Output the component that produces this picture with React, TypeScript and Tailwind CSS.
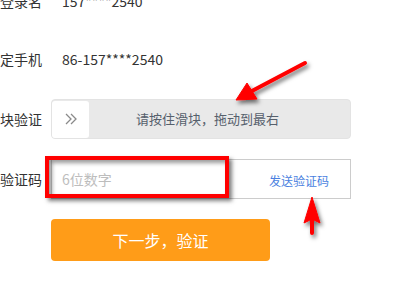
export default function App() {
  const font = { fontFamily: '"Noto Sans CJK SC", "Noto Sans", sans-serif' };

  return (
    <main className="relative h-[300px] w-[400px] overflow-hidden bg-white" style={font}>
      <div className="mt-[-21px] flex flex-col gap-5">
        <div className="flex h-[40px] items-center pt-[4px]">
          <div className="flex w-[42px] shrink-0 justify-end whitespace-nowrap text-[14px] text-[#333]">登录名</div>
          <div className="ml-5 text-[14px] text-[#333]">157****2540</div>
        </div>

        <div className="flex h-[40px] items-center">
          <div className="flex w-[42px] shrink-0 justify-end whitespace-nowrap text-[14px] text-[#333]">绑定手机</div>
          <div className="ml-5 text-[14px] text-[#333]">86-157****2540</div>
        </div>

        <div className="flex h-[40px] items-center">
          <div className="flex w-[42px] shrink-0 justify-end whitespace-nowrap text-[14px] text-[#333]">滑块验证</div>
          <div className="relative ml-[9px] flex h-[40px] w-[300px] items-center rounded-[4px] border border-[#e3e3e3] bg-[#e9e9e9]">
            <div className="flex h-[37px] w-[37px] items-center justify-center rounded-[3px] bg-white">
              <svg width="14" height="14" viewBox="0 0 14 14" fill="none" stroke="#8a8a8a" strokeWidth="1.3">
                <polyline points="2,2 7,7 2,12" />
                <polyline points="7,2 12,7 7,12" />
              </svg>
            </div>
            <div className="flex-1 pr-[24px] text-center text-[13px] text-[#56606c]">请按住滑块，拖动到最右</div>
          </div>
        </div>

        <div className="flex h-[40px] items-center">
          <div className="flex w-[42px] shrink-0 justify-end whitespace-nowrap text-[14px] text-[#333]">验证码</div>
          <div className="relative ml-[9px] flex h-[40px] w-[300px] items-center justify-between border border-[#cccccc] pl-[10px] pr-[21px]">
            <span className="text-[14px] text-[#bdbdbd]">6位数字</span>
            <span className="mt-[4px] text-[12px] text-[#4a7fe0]">发送验证码</span>
            <div className="absolute left-[-7px] top-[-4px] h-[42px] w-[184px] border-4 border-[#ff0000] shadow-[3px_3px_4px_rgba(0,0,0,0.5),inset_3px_3px_4px_rgba(0,0,0,0.4)]" />
          </div>
        </div>

        <div className="ml-[51px] flex h-[42px] w-[219px] items-center justify-center rounded-[4px] bg-[#ff9c18] text-[16px] text-white">
          下一步，验证
        </div>
      </div>

      <svg className="pointer-events-none absolute left-0 top-0" width="400" height="300" viewBox="0 0 400 300">
        <defs>
          <filter id="sh" x="-20%" y="-20%" width="140%" height="140%">
            <feDropShadow dx="2" dy="3" stdDeviation="2" floodColor="#000" floodOpacity="0.55" />
          </filter>
        </defs>
        <g filter="url(#sh)" fill="#ff0000" stroke="#ff0000">
          <line x1="305" y1="63" x2="250" y2="92" strokeWidth="4" strokeLinecap="round" />
          <polygon points="236,100 257,99 252,91 247,83" strokeWidth="1" strokeLinejoin="round" />
          <line x1="312" y1="216" x2="312" y2="233" strokeWidth="4" strokeLinecap="round" />
          <polygon points="312,197 320,223 312,219 304,223" strokeWidth="1" strokeLinejoin="round" />
        </g>
      </svg>
    </main>
  );
}
